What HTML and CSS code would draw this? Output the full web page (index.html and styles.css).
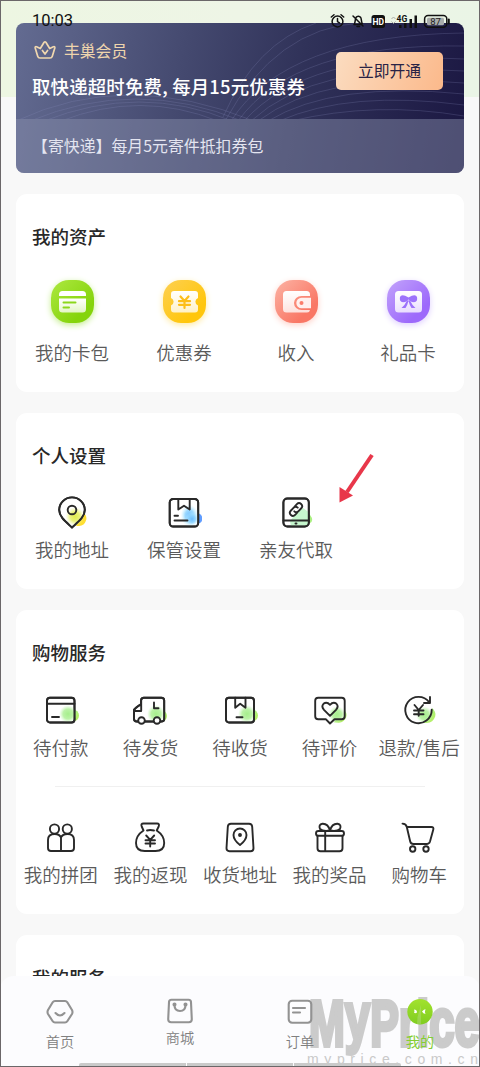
FILE: index.html
```html
<!DOCTYPE html>
<html lang="zh-CN">
<head>
<meta charset="utf-8">
<title>我的</title>
<link rel="stylesheet" href="styles.css">
</head>
<body>
<svg class="defs" width="0" height="0">
  <defs>
    <radialGradient id="green"><stop offset="0" stop-color="#a5ef8b"/><stop offset=".55" stop-color="#aff097" stop-opacity=".85"/><stop offset="1" stop-color="#c8f7ba" stop-opacity="0"/></radialGradient>
    <linearGradient id="edge" x1="0" y1="0" x2="1" y2="1"><stop offset="0" stop-color="#9ff093"/><stop offset="1" stop-color="#baf05c"/></linearGradient>
    <radialGradient id="yellow"><stop offset="0" stop-color="#e0ec4c"/><stop offset=".5" stop-color="#e6f064" stop-opacity=".85"/><stop offset="1" stop-color="#f0f79c" stop-opacity="0"/></radialGradient>
    <radialGradient id="blue"><stop offset="0" stop-color="#6cbcff"/><stop offset=".5" stop-color="#8dd3ff" stop-opacity=".85"/><stop offset="1" stop-color="#c5f2ff" stop-opacity="0"/></radialGradient>
    <linearGradient id="paper" x1="0" y1="0" x2="0" y2="1"><stop offset="0" stop-color="#fff"/><stop offset="1" stop-color="#fff" stop-opacity=".76"/></linearGradient>
    <linearGradient id="face" x1="0" y1="0" x2="0" y2="1"><stop offset="0" stop-color="#a2e22e"/><stop offset="1" stop-color="#80cd20"/></linearGradient>
  </defs>
</svg>
<div class="screen">
  <div class="status">
    <span class="time">10:03</span>
    <svg class="indicators" width="122" height="18" viewBox="0 0 122 18">
      <g fill="none" stroke="#111" stroke-width="1.5" stroke-linecap="round" stroke-linejoin="round">
        <circle cx="7.5" cy="9.5" r="5.4"/><path d="M7.5 6.5v3.2l2 1.2M1.3 5 4 2.700M13.700 5 11 2.700"/>
        <path d="M24 12.500h6.800M24.500 11.500c1-2 .5-4.500 1.500-6 1-1.700 3.500-1.900 4.700 0 .8 1.400.5 3.900 1.500 6M23 4l10 10M27 14.500h2.500"/>
        <rect x="94.600" y="3.600" width="22.200" height="11.600" rx="3.500"/><path d="M118.800 7.500v4" stroke-width="2"/>
      </g>
      <rect x="41.500" y="3" width="13.500" height="13" rx="2.500" fill="#111"/>
      <rect x="97" y="5.700" width="17" height="7.500" rx="1.500" fill="#a8acab"/>
      <path d="M61.500 7l2-2 2 2M61.500 9.500l2 2 2-2" fill="none" stroke="#a9aaa5"/>
      <path d="M69 13h2.500v3H69zM74 11h2.500v5H74zM79.500 7H82v9h-2.500zM84.500 3.500H87V16h-2.500z" fill="#111"/>
      <text x="48.200" y="12.700" font-size="8.500" font-weight="700" text-anchor="middle" fill="#fff">HD</text>
      <text x="66.500" y="9.600" font-size="8.500" font-weight="700" fill="#111">4G</text>
      <text x="105.600" y="13" font-size="9.500" text-anchor="middle" fill="#222">87</text>
    </svg>
  </div>

  <main class="content">
    <section class="member">
      <svg class="waves" width="448" height="96" viewBox="0 0 448 96" fill="none" stroke="#8990c0" stroke-opacity=".23">
        <path d="M14 98Q120 54 226 98M28 98Q124 60 216 98M45 98Q124 67 202 98M0 98Q110 46 238 98"/>
        <path d="M209 98Q260 5 344 0M215 98Q270 12 448 10M222 98Q278 20 448 23M228 98Q292 28 448 36M235 98Q300 38 448 48M242 98Q308 48 448 60M252 98Q318 58 448 71M263 98Q334 67 448 82M275 98Q360 78 448 93M207 94Q240 20 300 0"/>
      </svg>
      <div class="member-main">
        <div class="member-copy">
          <div class="member-name">
            <svg width="24" height="22" viewBox="0 0 24 22" fill="none" stroke="#f0d7af" stroke-width="1.700" stroke-linecap="round" stroke-linejoin="round"><path d="M7 19h10q1.800 0 2.300-1.800l2.500-8.200q.3-1.800-1.400-1.300l-3.700 1.800-3.800-6.200q-.9-1-1.800 0L7.300 9.500 3.600 7.700q-1.700-.5-1.400 1.300l2.500 8.200Q5.200 19 7 19Z"/><path d="m9.400 11.500 2.600 3.500 2.600-3.500"/></svg>
            <span>丰巢会员</span>
          </div>
          <h1 class="member-title">取快递超时免费, 每月15元优惠券</h1>
        </div>
        <button class="open">立即开通</button>
      </div>
      <div class="member-extra">【寄快递】每月5元寄件抵扣券包</div>
    </section>

    <section class="card assets">
      <h2 class="title">我的资产</h2>
      <div class="grid four">
        <div class="item"><div class="tile lime"><svg width="43" height="43" viewBox="0 0 43 43"><path d="M8 16v-1.500a3.500 3.500 0 0 1 3.500-3.500h20a3.500 3.500 0 0 1 3.500 3.500V16z" fill="#fff"/><path d="M8 18.500h27V29a3.500 3.500 0 0 1-3.500 3.500h-20A3.500 3.500 0 0 1 8 29z" fill="url(#paper)"/><path d="M12.500 22.500h12M12.500 27.500h5.500" stroke="#8bd71b" stroke-width="2" stroke-linecap="round"/></svg></div><span>我的卡包</span></div>
        <div class="item"><div class="tile gold"><svg width="43" height="43" viewBox="0 0 43 43"><path d="M11 11h21a3 3 0 0 1 3 3v4a4 4 0 0 0 0 7.500v4a3 3 0 0 1-3 3H11a3 3 0 0 1-3-3v-4a4 4 0 0 0 0-7.500v-4a3 3 0 0 1 3-3z" fill="url(#paper)"/><path d="m17.500 16.500 4 4.500 4-4.500M16 21.200h11M16 24.800h11M21.500 21v7" fill="none" stroke="#fdbe18" stroke-width="2.200" stroke-linecap="round"/></svg></div><span>优惠券</span></div>
        <div class="item"><div class="tile coral"><svg width="43" height="43" viewBox="0 0 43 43"><path d="M11.500 11h20a3.500 3.500 0 0 1 3.500 3.500V16h-8.500a7 6.500 0 0 0 0 14H35a3 3 0 0 1-3 2.500H11.500A3.500 3.500 0 0 1 8 29V14.500a3.500 3.500 0 0 1 3.500-3.500z" fill="url(#paper)"/><path d="M36 17.800h-9.500a5.200 5.200 0 0 0 0 10.400H36z" fill="#fff" fill-opacity=".88"/><circle cx="26.500" cy="23" r="2" fill="#fb7d6b"/></svg></div><span>收入</span></div>
        <div class="item"><div class="tile violet"><svg width="43" height="43" viewBox="0 0 43 43"><rect x="8" y="11" width="27" height="21.500" rx="3.500" fill="url(#paper)"/><path d="M21.500 17.500q-7-4-8.500-.5-1 5 3 5.200 3 0 5.500-2.700 2.500 2.700 5.500 2.700 4-.2 3-5.200-1.500-3.500-8.500.5zM20 20.500q-2 4.500-5.500 7.500h4q2-3 3-7 1 4 3 7h4q-3.500-3-5.500-7.500z" fill="#9d73fb"/></svg></div><span>礼品卡</span></div>
      </div>
    </section>

    <section class="card settings">
      <h2 class="title">个人设置</h2>
      <div class="grid four">
        <div class="item"><svg class="line" viewBox="0 0 36 36"><path d="M29.500 18.500q4 4 2.500 8-1.500 5-7 5.500h-3z" fill="#ffdf32" stroke="none"/><path d="M18 33.500C12 28 5.200 23 5.200 16a12.800 12.600 0 0 1 25.600 0C30.800 23 24 28 18 33.500Z" fill="#fff"/><circle class="glow" cx="21" cy="22.500" r="9.500" fill="url(#yellow)"/><path d="M18 33.500C12 28 5.200 23 5.200 16a12.800 12.600 0 0 1 25.600 0C30.800 23 24 28 18 33.500Z"/><circle cx="18" cy="16" r="4.300"/></svg><span>我的地址</span></div>
        <div class="item"><svg class="line" viewBox="0 0 36 36"><circle cx="30.500" cy="24.500" r="5.800" fill="#5f9cff" stroke="none"/><rect x="3.700" y="5" width="28.500" height="27.500" rx="3.500" fill="#fff"/><ellipse cx="23.500" cy="21.500" rx="9" ry="11" class="glow" fill="url(#blue)"/><circle cx="26" cy="25" r="7" class="glow" fill="url(#blue)"/><rect x="3.700" y="5" width="28.500" height="27.500" rx="3.500"/><path d="M12.300 5v10.500l5.700-3.700 5.700 3.700V5M8.500 21.800H12M8.500 26.500h13"/></svg><span>保管设置</span></div>
        <div class="item"><svg class="line" viewBox="0 0 36 36"><path d="M29 18q7 6 4.500 10L29 31z" fill="#aaf080" stroke="none"/><rect x="5.400" y="4.500" width="25.400" height="28" rx="4" fill="#fff"/><path d="M12 28q3-7 13-14l5.500 4v13.500H13z" fill="#a8f3b4" fill-opacity=".65" class="glow"/><rect x="5.400" y="4.500" width="25.400" height="28" rx="4"/><path d="M5.500 26.500h25.300M17.500 29.500h1"/><g transform="rotate(-47 18 15.500)"><path d="M16.800 18.500H13.500a3 3 0 0 1 0-6h4a3 3 0 0 1 3 3M19.200 12.500h3.300a3 3 0 0 1 0 6h-4a3 3 0 0 1-3-3"/></g></svg><span>亲友代取</span></div>
      </div>
      <svg class="pointer" width="36" height="50" viewBox="0 0 36 50"><path d="M34 2 9 39" stroke="#e8374a" stroke-width="4"/><path d="M1.500 49.500V34L15 42.500Z" fill="#e8374a"/></svg>
    </section>

    <section class="card shopping">
      <h2 class="title">购物服务</h2>
      <div class="grid five first">
        <div class="item"><svg class="line" viewBox="0 0 36 36"><circle cx="30" cy="23.500" r="6" fill="url(#edge)" stroke="none"/><rect x="4" y="5.700" width="27.500" height="24.800" rx="3" fill="#fff"/><circle cx="25" cy="22" r="9" class="glow" fill="url(#green)"/><rect x="4" y="5.700" width="27.500" height="24.800" rx="3"/><path d="M4 11.800h27.500M9 25h7"/></svg><span>待付款</span></div>
        <div class="item"><svg class="line" viewBox="0 0 36 36"><circle cx="29" cy="24" r="6" fill="url(#edge)" stroke="none"/><path d="M9 12V8.500q0-2.800 2.800-2.800h17.500q2.900 0 2.900 2.800v19q0 2-3 2H5q-3 0-3-3v-9z" fill="#fff"/><circle cx="24" cy="22" r="9" class="glow" fill="url(#green)"/><path d="M6.500 29.500H4.500q-2.500 0-2.500-2.500v-7.500q0-3 4-5.500 1.500-1 3.200-1V8.500q0-2.800 2.800-2.800h17.300q2.900 0 2.900 2.800v18.500q0 2.500-3.200 2.500M13 29.500h8.500M9.200 12v7H2.500M22 10.500v5.800h4.500"/><circle cx="9.500" cy="28.500" r="3.300" fill="#fff"/><circle cx="25" cy="28.500" r="3.300" fill="#fff"/></svg><span>待发货</span></div>
        <div class="item"><svg class="line" viewBox="0 0 36 36"><circle cx="30" cy="23.500" r="6" fill="url(#edge)" stroke="none"/><rect x="4" y="5.700" width="28" height="24.800" rx="3" fill="#fff"/><circle cx="25" cy="22" r="9" class="glow" fill="url(#green)"/><rect x="4" y="5.700" width="28" height="24.800" rx="3"/><path d="M13.200 5.700v10l5-4 5.300 4v-10M14.500 25.300h6"/></svg><span>待收货</span></div>
        <div class="item"><svg class="line" viewBox="0 0 36 36"><path d="M32 18q3.500 3 2.200 7-1.700 5-7.500 5.800l-5-.5L25 27h6.500z" fill="url(#edge)" stroke="none"/><circle cx="25" cy="22.500" r="8.500" class="glow" fill="url(#green)"/><path d="M6.200 5.700h23.500q3 0 3 3v15.600q0 3-3 3h-7.200L18 31.500l-4-4.200H6.200q-3 0-3-3V8.700q0-3 3-3Z"/><path d="m18 23.800-6-6q-3-3.500-.5-6 3.300-2.500 6.500 1 3.200-3.500 6.500-1 2.500 2.500-.5 6z"/></svg><span>待评价</span></div>
        <div class="item"><svg class="line" viewBox="0 0 36 36"><path d="M31.200 16q4.500 4.500 3 8.500-2 6-8.500 6.500h-5q10-3.500 10.500-15z" fill="url(#edge)" stroke="none"/><circle cx="23.500" cy="23" r="8.500" class="glow" fill="url(#green)"/><path d="M30.700 17.800A13.200 13.200 0 1 1 28.200 10.300M29 5v6h-6M13.500 13l4.200 5 4.300-5M13 18.500h9.500M13 22.200h9.500M17.700 18v5.800"/></svg><span>退款/售后</span></div>
      </div>
      <div class="divider"></div>
      <div class="grid five second">
        <div class="item"><svg class="line" viewBox="0 0 36 36"><circle cx="11.500" cy="9" r="4.600"/><circle cx="24.300" cy="9" r="4.600"/><path d="M18 17.500q-1.500-3.500-6.300-3.500Q5 14 5 20v8q0 3 3 3h20q3 0 3-3v-8q0-6-6.500-6-5 0-6.500 3.500V31"/></svg><span>我的拼团</span></div>
        <div class="item"><svg class="line" viewBox="0 0 36 36"><path d="M11.500 10.500 9.700 6.500Q8.500 3.500 11.500 3.500h13.500q2.800 0 1.700 3l-2 4q7.500 5 7.500 12.500 0 8-8.700 8H12.700Q4 31 4 23q0-7.500 7.500-12.500ZM15 10.500q3-1 7 0M14.200 15.500l4 4.300 4-4.300M13.500 20.200H23M13.500 23.500H23M18.200 20v6.500"/></svg><span>我的返现</span></div>
        <div class="item"><svg class="line" viewBox="0 0 36 36"><path d="M9 3.700h18q3 0 3.200 3l1.300 21.500q0 3-3 3h-21q-3 0-3-3L5.800 6.700q.2-3 3.200-3Z"/><path d="M18 25q-6.500-5-6.500-10a6.500 6.500 0 0 1 13 0q0 5-6.500 10Z"/><circle cx="18" cy="15" r="1" fill="#292929"/></svg><span>收货地址</span></div>
        <div class="item"><svg class="line" viewBox="0 0 36 36"><rect x="4" y="11" width="28" height="4.800" rx="2.400"/><path d="M5.500 16v12.200q0 3 3 3h19q3 0 3-3V16M13.200 11v20M18 10.500q-7 1.200-10-1.500-1.800-4.500 2.500-5.200Q16 3.500 18 10.500 20 3.500 25.500 3.800 29.800 4.500 28 9q-3 2.700-10 1.500Z"/></svg><span>我的奖品</span></div>
        <div class="item"><svg class="line" viewBox="0 0 36 36"><path d="M1.500 3.600q3.500 0 4.300 3.400h24.500q2.700 0 2 2.500L29 21.500q-.8 2.500-3.500 2.500H12.500q-2.700 0-3.300-2.500L5.800 7"/><circle cx="11.700" cy="29" r="2.700"/><circle cx="25" cy="29" r="2.700"/></svg><span>购物车</span></div>
      </div>
    </section>

    <section class="card services"><h2 class="title">我的服务</h2></section>
  </main>

  <nav class="tabs">
    <svg class="watermark" width="174" height="70" viewBox="0 0 174 70">
      <text class="mark" x="3" y="48.500" textLength="171" lengthAdjust="spacingAndGlyphs">M<tspan class="low" dy="-6">y</tspan><tspan dy="6">P</tspan><tspan class="low">rice</tspan></text>
      <text class="site" x="1" y="67" textLength="171">myprice.com.cn</text>
    </svg>
    <div class="tab"><svg viewBox="0 0 30 30"><path d="M10 4h10q1.500 0 2.300 1.300L27 13q1 2 0 4l-4.700 7.200Q21.500 25.500 20 25.500H10q-1.500 0-2.300-1.300L3 17q-1-2 0-4L7.700 5.300Q8.500 4 10 4ZM10.500 16q4.500 5 9 0"/></svg><span>首页</span></div>
    <div class="tab mall"><svg viewBox="0 0 30 30"><path d="M6.500 3.800h17q2.500 0 2.500 2.500l.8 17q0 3-3 3H6.200q-3 0-3-3l.8-17q0-2.500 2.500-2.500ZM9.500 9q0 6 5.500 6t5.500-6"/><circle cx="9.500" cy="8.500" r="1"/><circle cx="20.500" cy="8.500" r="1"/></svg><span>商城</span></div>
    <div class="tab"><svg viewBox="0 0 30 30"><rect x="3.700" y="3.800" width="22.600" height="22" rx="3.500"/><path d="M8 11h12M8 15.500h7"/></svg><span>订单</span></div>
    <div class="tab active"><svg viewBox="0 0 30 30"><circle cx="15" cy="14.700" r="12.700" fill="url(#face)" stroke="none"/><path d="M12.500 20 16 8v19h-4z" fill="#d0dec0" opacity=".28" stroke="none"/><path d="M9 12.500q3 0 3 3-2 1.500-3 0 1-1 0-3ZM20.500 12q-2 .5-3.500 2.500 1 2 3.500 2.500-1-2.500 0-5Z" fill="#fff" stroke="none"/></svg><span>我的</span></div>
    <div class="scroll"><i></i><i></i><i></i></div>
  </nav>
</div>
</body>
</html>
```

FILE: styles.css
```css
* { box-sizing: border-box; }
body { margin: 0; font-family: "Noto Sans CJK SC", sans-serif; }
h1, h2 { margin: 0; font-weight: 500; }
.defs { position: absolute; }
svg { display: block; flex: none; }

.screen {
  position: relative;
  width: 480px;
  height: 1067px;
  overflow: hidden;
  background: linear-gradient(90deg, #edf6e2, #eef5e6 50%, #eaf5e6) 0 0 / 100% 97px no-repeat, #f8f8f8;
}
.screen::after {
  content: "";
  position: absolute;
  inset: 0;
  border: 1px solid #6b6769;
  pointer-events: none;
}

.status {
  position: absolute;
  z-index: 2;
  top: 12px;
  left: 32px;
  right: 28px;
  display: flex;
  justify-content: space-between;
  align-items: center;
  height: 18px;
}
.time { font: 16.500px/18px Roboto, sans-serif; color: #111; }
.indicators { font-family: Roboto, sans-serif; }

.content {
  display: flex;
  flex-direction: column;
  gap: 21px;
  padding: 23px 16px 0;
}

.member {
  position: relative;
  height: 150px;
  overflow: hidden;
  border-radius: 8px;
  background: linear-gradient(100deg, #636b91 0%, #454a70 36%, #303259 62%, #1b1742 100%);
}
.waves { position: absolute; top: 0; left: 0; }
.member-main {
  position: relative;
  display: flex;
  justify-content: space-between;
  height: 96px;
  padding: 15px 21px 0 16px;
}
.member-name {
  display: flex;
  align-items: center;
  gap: 7px;
  height: 24px;
  padding-left: 1px;
  font-size: 15.800px;
  color: #efd5ad;
}
.member-title {
  margin-top: 11px;
  font-size: 18.400px;
  letter-spacing: .2px;
  line-height: 26px;
  white-space: nowrap;
  color: #fff;
}
.open {
  width: 107px;
  height: 38px;
  margin-top: 14px;
  padding: 0;
  border: 0;
  border-radius: 5px;
  background: linear-gradient(110deg, #fbdcc0, #fbb98b);
  font: 15.800px/38px "Noto Sans CJK SC", sans-serif;
  color: #292345;
}
.member-extra {
  position: relative;
  height: 54px;
  padding-left: 16px;
  background: rgba(140, 147, 174, .46);
  font-size: 15.900px;
  line-height: 53px;
  color: #e4e5f0;
}

.card {
  position: relative;
  padding-top: 30px;
  border-radius: 11px;
  background: #fff;
}
.assets { height: 198px; }
.settings { height: 176px; }
.shopping { height: 304px; }
.services { height: 132px; }
.title {
  padding-left: 16px;
  font-size: 18.500px;
  line-height: 24px;
  color: #282828;
}

.grid { display: grid; }
.four { grid-template-columns: repeat(4, 1fr); }
.five { grid-template-columns: repeat(5, 1fr); }
.item {
  display: flex;
  flex-direction: column;
  align-items: center;
  gap: 7px;
  font-size: 18.500px;
  font-weight: 350;
  line-height: 24px;
  white-space: nowrap;
  color: #5a5a5a;
}
.assets .grid { margin-top: 32px; }
.assets .item { gap: 17px; }
.settings .grid { margin-top: 27px; }
.first { margin-top: 28px; }
.second { margin-top: 33px; }
.second .item { gap: 6px; }
.divider {
  height: 1px;
  margin: 27px 39px 0;
  background: #f0f0f0;
}

.tile {
  width: 43px;
  height: 43px;
  border-radius: 18px;
}
.lime { background: linear-gradient(135deg, #ade840, #85d40c 75%); box-shadow: 0 2px 6px #c5ed8e; }
.gold { background: linear-gradient(135deg, #fdd052, #ffc60c 75%); box-shadow: 0 2px 6px #ffeaa2; }
.coral { background: linear-gradient(135deg, #fcb3a4, #f97765 75%); box-shadow: 0 2px 6px #ffd1c8; }
.violet { background: linear-gradient(135deg, #c2a3fb, #9d69fb 75%); box-shadow: 0 2px 6px #dfd0ff; }

.line {
  width: 36px;
  height: 36px;
  fill: none;
  stroke: #292929;
  stroke-width: 1.900;
  stroke-linecap: round;
  stroke-linejoin: round;
}
.glow { stroke: none; }
.pointer { position: absolute; top: 40px; left: 322px; }

.tabs {
  position: absolute;
  left: 0;
  right: 0;
  bottom: 0;
  display: grid;
  grid-template-columns: repeat(4, 1fr);
  height: 91px;
  padding-top: 21px;
  border-radius: 14px 14px 0 0;
  background: #fcfcfe;
}
.tab {
  position: relative;
  display: flex;
  flex-direction: column;
  align-items: center;
  gap: 4px;
  font-size: 14.200px;
  font-weight: 350;
  line-height: 20px;
  color: #808080;
}
.tab svg {
  width: 30px;
  height: 30px;
  fill: none;
  stroke: #929292;
  stroke-width: 2.100;
  stroke-linecap: round;
  stroke-linejoin: round;
}
.mall { gap: 1px; }
.mall svg { margin-top: -1px; }
.active { font-weight: 400; color: #84ce32; }
.watermark { position: absolute; right: 0; bottom: 0; }
.mark {
  font: 700 64px "Liberation Sans", sans-serif;
  fill: #cbcbcb;
  stroke: #cbcbcb;
  stroke-width: 4;
}
.low { font-size: 68px; }
.site { font: 14px "Liberation Sans", sans-serif; fill: #c9c9c9; }
.scroll {
  position: absolute;
  left: 79px;
  bottom: 1px;
  display: flex;
  gap: 1px;
  width: 322px;
  height: 3px;
  overflow: hidden;
  border-radius: 2px 2px 0 0;
}
.scroll i { flex: 1; background: #cacaca; }
```
